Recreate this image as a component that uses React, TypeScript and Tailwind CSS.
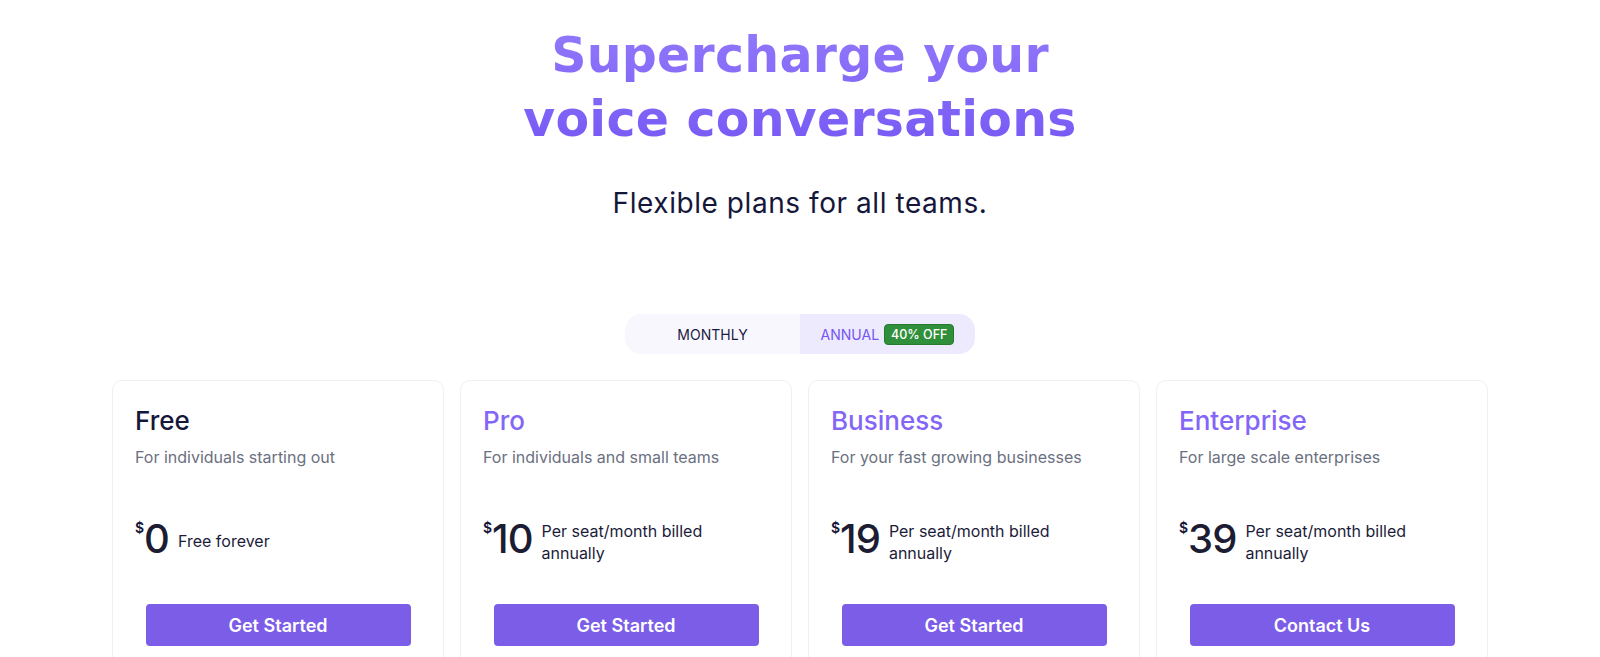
const plans = [
  {
    name: "Free",
    desc: "For individuals starting out",
    price: "0",
    note: "Free forever",
    cta: "Get Started",
    accent: false,
  },
  {
    name: "Pro",
    desc: "For individuals and small teams",
    price: "10",
    note: "Per seat/month billed annually",
    cta: "Get Started",
    accent: true,
  },
  {
    name: "Business",
    desc: "For your fast growing businesses",
    price: "19",
    note: "Per seat/month billed annually",
    cta: "Get Started",
    accent: true,
  },
  {
    name: "Enterprise",
    desc: "For large scale enterprises",
    price: "39",
    note: "Per seat/month billed annually",
    cta: "Contact Us",
    accent: true,
  },
];

function BillingToggle() {
  return (
    <div className="mx-auto flex h-10 w-[350px] overflow-hidden rounded-2xl text-[14px]">
      <button className="flex flex-1 items-center justify-center bg-[#f8f7fd] text-[#1b1b45]">
        MONTHLY
      </button>
      <button className="flex flex-1 items-center justify-center gap-[5px] bg-[#eeeafe] text-[#7456f0]">
        ANNUAL
        <span className="rounded-[4px] border border-[#267a30] bg-[#2f8f3a] px-[6px] py-[2px] text-[12.5px] font-medium leading-[15px] text-white">
          40% OFF
        </span>
      </button>
    </div>
  );
}

function PlanCard({ plan }: { plan: (typeof plans)[number] }) {
  return (
    <div className="flex min-h-[300px] flex-col rounded-[10px] border border-[#efeff3] bg-white px-[22px] pt-[22px] pb-8">
      <h3
        className={
          "text-[26px] font-medium leading-[36px] " +
          (plan.accent ? "text-[#8466f7]" : "text-[#15173a]")
        }
      >
        {plan.name}
      </h3>
      <p className="mt-[6px] text-[16px] leading-6 text-[#6b7080]">{plan.desc}</p>
      <div className="mt-[48px] flex h-[48px] items-start">
        <span className="mt-[4px] text-[14px] font-semibold leading-none text-[#15173a]">$</span>
        <span className="text-[40px] font-medium leading-[44px] tracking-tight text-[#1c1c33]">
          {plan.price}
        </span>
        <span
          className={
            "ml-[9px] max-w-[180px] text-[16px] leading-[22px] text-[#1c1c3a] " +
            (plan.price === "0" ? "mt-[13px]" : "mt-[3px]")
          }
        >
          {plan.note}
        </span>
      </div>
      <button className="mx-auto mt-[39px] h-[42px] w-[265px] rounded-[4px] bg-[#7b5de8] text-[18px] font-semibold text-white">
        {plan.cta}
      </button>
    </div>
  );
}

export default function App() {
  return (
    <div className="min-h-screen bg-white font-['Inter','Noto_Sans',sans-serif] text-[#15173a]">
      <section className="pt-[24px] text-center">
        <h1 className="mx-auto bg-gradient-to-b from-[#9379fb] to-[#7657f4] bg-clip-text font-['DejaVu_Sans','Inter',sans-serif] text-[49px] font-bold leading-[64px] tracking-[0.005em] text-transparent">
          Supercharge your
          <br />
          voice conversations
        </h1>
        <p className="mt-[33px] text-[28px] leading-9 tracking-[0.02em] text-[#15173a]">
          Flexible plans for all teams.
        </p>
      </section>

      <div className="mt-[93px]">
        <BillingToggle />
      </div>

      <div className="mx-auto mt-[26px] grid max-w-[1376px] grid-cols-4 gap-4">
        {plans.map((p) => (
          <PlanCard key={p.name} plan={p} />
        ))}
      </div>
    </div>
  );
}
